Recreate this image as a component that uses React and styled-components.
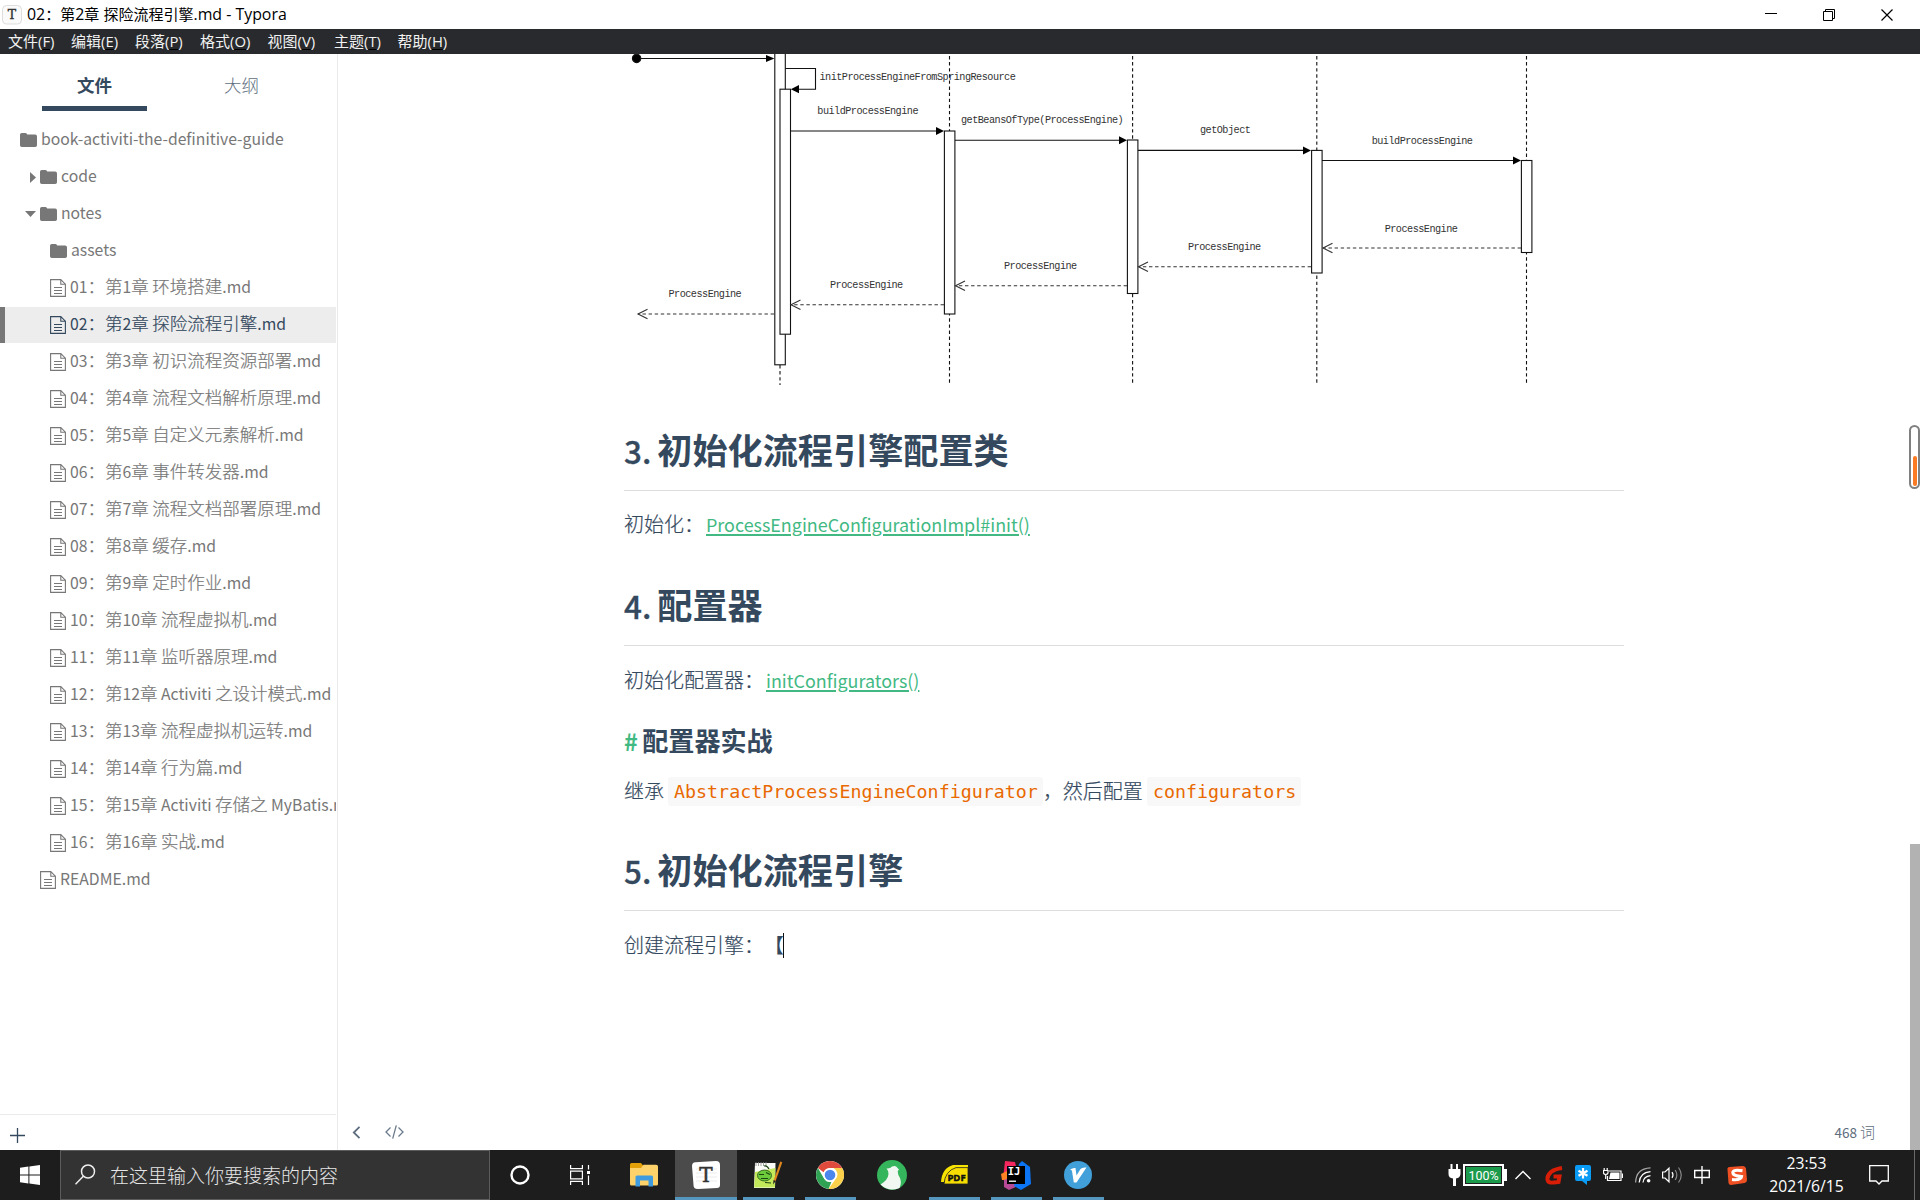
import React from 'react';
import styled, { createGlobalStyle } from 'styled-components';

const Global = createGlobalStyle`
  * { box-sizing: border-box; }
  html, body { margin: 0; padding: 0; overflow: hidden; background: #fff; }
  svg { display: block; flex: none; }
`;

const UI = `"Open Sans", "Noto Sans CJK SC", sans-serif`;
const DOC = `"Noto Sans CJK SC", sans-serif`;

const Screen = styled.div`
  width: 1920px;
  height: 1200px;
  display: flex;
  flex-direction: column;
  overflow: hidden;
  font-family: ${DOC};
  color: #34495e;
`;

/* ---------- mixed CJK / latin text ---------- */
const Latin = styled.span`
  font-size: ${(p) => p.$scale}em;
  font-weight: 400;
  -webkit-text-stroke: 0;
`;
function Mixed({ text, scale = 0.9 }) {
  return text.split(/([\u0020-\u007e]+)/).filter(Boolean).map((run, i) =>
    /[\u0020-\u007e]/.test(run[0]) ? <Latin key={i} $scale={scale}>{run}</Latin> : run
  );
}

/* ---------- title bar ---------- */
const TitleBar = styled.header`
  height: 29px;
  flex: none;
  display: flex;
  align-items: center;
  padding: 0 4px 0 2px;
  background: #fff;
  color: #000;
  font-family: ${UI};
`;
const TitleText = styled.div`
  flex: 1;
  margin-left: 5px;
  font-size: 15px;
  line-height: 27px;
  padding-bottom: 1px;
  white-space: pre;
`;
const WinButton = styled.div`
  width: 58px;
  height: 29px;
  display: flex;
  align-items: center;
  justify-content: center;
`;
const MenuBar = styled.nav`
  height: 25px;
  flex: none;
  display: flex;
  background: #292a2d;
  color: #f2f2f2;
  font-family: ${UI};
  font-size: 15px;
  line-height: 25px;
  padding-left: 8px;
`;
const MenuItem = styled.div`
  width: ${(p) => p.$w}px;
  white-space: nowrap;
  u { text-decoration-color: #000; text-underline-offset: 2px; }
`;

/* ---------- workspace ---------- */
const Workspace = styled.div`
  flex: 1;
  min-height: 0;
  display: flex;
`;
const Sidebar = styled.aside`
  width: 338px;
  flex: none;
  border-right: 1px solid #eaeaea;
  padding-right: 1px;
  display: flex;
  flex-direction: column;
`;
const Tabs = styled.div`
  height: 57px;
  margin-bottom: 11px;
  display: flex;
  gap: 42px;
  padding-left: 42px;
`;
const Tab = styled.div`
  width: 105px;
  padding-top: 15px;
  height: 57px;
  font-size: 17.5px;
  line-height: 32px;
  text-align: center;
  font-weight: ${(p) => (p.$active ? 700 : 300)};
  color: ${(p) => (p.$active ? '#34495e' : '#5d6d7e')};
  border-bottom: 5px solid ${(p) => (p.$active ? '#34495e' : 'transparent')};
`;
const Tree = styled.div`
  flex: 1;
  display: flex;
  flex-direction: column;
  gap: 1px;
  overflow: hidden;
`;
const Row = styled.div`
  height: 36px;
  flex: none;
  display: flex;
  align-items: center;
  padding-left: ${(p) => p.$indent - (p.$active ? 5 : 0)}px;
  font-size: 17.5px;
  font-weight: 300;
  line-height: 36px;
  white-space: pre;
  overflow: hidden;
  color: ${(p) => (p.$active ? '#34495e' : '#777')};
  background: ${(p) => (p.$active ? '#ededed' : 'transparent')};
  border-left: ${(p) => (p.$active ? '5px solid #777' : '0')};
  -webkit-text-stroke: 0.2px;
`;
const RowLabel = styled.span`
  margin-left: 4px;
  padding-bottom: 3px;
`;
const Twist = styled.span`
  width: 15px;
  display: flex;
  justify-content: ${(p) => (p.$open ? 'flex-start' : 'center')};
`;
const SideFooter = styled.div`
  height: 36px;
  border-top: 1px solid #eaeaea;
  padding: 13px 0 0 10px;
`;

const Main = styled.main`
  flex: 1;
  min-width: 0;
  display: flex;
  background: #fff;
`;
const Pane = styled.section`
  flex: 1;
  display: flex;
  flex-direction: column;
  min-width: 0;
`;
const Article = styled.article`
  width: 1000px;
  margin-left: 286px;
  flex: 1;
  min-height: 0;
`;
const Figure = styled.figure`
  margin: 0 0 37px;
  height: 336px;
`;
const H2 = styled.h2`
  margin: ${(p) => p.$top}px 0 ${(p) => p.$bottom ?? 18}px;
  height: 64px;
  border-bottom: 1px solid #ddd;
  font-size: 35.15px;
  line-height: 44px;
  font-weight: 700;
  white-space: pre;
`;
const Num = styled.span`
  margin-right: -1px;
  font-size: 31.4px;
  font-weight: 500;
  -webkit-text-stroke: 0.3px;
`;
const H3 = styled.h3`
  margin: 26px 0 16px;
  font-size: 26.1px;
  line-height: 36px;
  font-weight: 700;
  white-space: pre;
`;
const Hash = styled.span`
  margin-right: -1px;
  color: #42b983;
  font-size: 23.5px;
`;
const P = styled.p`
  margin: 0;
  height: 32px;
  display: flex;
  align-items: center;
  font-size: 20px;
  line-height: 32px;
  font-weight: 300;
  white-space: pre;
  text-spacing-trim: space-all;
  -webkit-text-stroke: 0.2px;
`;
const Link = styled.a`
  margin-left: 2px;
  font-size: 17.92px;
  font-weight: 400;
  color: #42b983;
  text-decoration: underline;
  text-decoration-thickness: 2px;
  text-underline-offset: 2px;
  text-decoration-skip-ink: auto;
  -webkit-text-stroke: 0;
`;
const Code = styled.code`
  margin-left: 4px;
  height: 29px;
  padding: 0 5px 0 6px;
  border-radius: 3px;
  background: #f8f8f8;
  color: #e96900;
  font-family: "DejaVu Sans Mono", monospace;
  font-size: 18.3px;
  letter-spacing: 0.02px;
  line-height: 29px;
  font-weight: 400;
  -webkit-text-stroke: 0;
`;
const Caret = styled.span`
  width: 1px;
  height: 25px;
  margin-left: -1px;
  background: #111;
`;
const StatusBar = styled.footer`
  height: 40px;
  display: flex;
  align-items: center;
  padding: 4px 34px 0 14px;
  color: #6b7b8b;
`;
const Spacer = styled.div`flex: 1;`;
const Gap = styled.div`width: 24px;`;
const WordCount = styled.div`
  font-size: 15px;
  font-weight: 300;
  color: #5d6d7e;
  line-height: 30px;
`;
const Rail = styled.div`
  width: 11px;
  flex: none;
  display: flex;
  flex-direction: column;
  align-items: flex-end;
  padding-top: 371px;
`;
const Gauge = styled.div`
  width: 11px;
  height: 64px;
  border: 2px solid #808080;
  border-radius: 6px;
  padding: 1px;
  display: flex;
  align-items: flex-end;
  justify-content: center;
`;
const GaugeFill = styled.div`
  width: 4px;
  height: 30px;
  border-radius: 2px;
  background: #fb7a24;
`;
const Thumb = styled.div`
  width: 10px;
  flex: 1;
  margin-top: 355px;
  background: #b2b2b2;
`;

/* ---------- taskbar ---------- */
const Taskbar = styled.div`
  height: 50px;
  flex: none;
  display: flex;
  background: #1d1d1d;
  font-family: ${UI};
`;
const Start = styled.div`
  width: 60px;
  display: flex;
  align-items: center;
  justify-content: center;
`;
const Search = styled.div`
  width: 430px;
  margin-right: -1px;
  border: 1px solid #5c5c5c;
  background: #333;
  display: flex;
  align-items: center;
  gap: 14px;
  padding: 0 0 2px 14px;
  color: #e6e6e6;
  font-family: ${DOC};
  font-weight: 300;
  font-size: 19px;
`;
const AppCell = styled.div`
  width: 62px;
  display: flex;
  align-items: center;
  justify-content: center;
  background: ${(p) => (p.$active ? '#4b4b4b' : 'transparent')};
  box-shadow: ${(p) => (p.$active ? 'inset 0 -3px #5596be' : 'none')};
`;
const Running = styled.div`
  width: 51px;
  height: 50px;
  display: flex;
  align-items: center;
  justify-content: center;
  border-top: 3px solid transparent;
  border-bottom: 3px solid ${(p) => (p.$on ? '#5596be' : 'transparent')};
`;
const Tray = styled.div`
  margin-left: auto;
  display: flex;
  align-items: center;
  color: #fff;
`;
const TraySlot = styled.div`
  width: ${(p) => p.$w}px;
  display: flex;
  align-items: center;
  justify-content: center;
`;
const Battery = styled.div`
  width: 41px;
  height: 22px;
  border: 2px solid #fff;
  background: #1c9a4b;
  box-shadow: inset 0 0 0 1px #1d1d1d;
  font-size: 12.5px;
  line-height: 19px;
  text-align: center;
  font-family: Roboto, sans-serif;
`;
const Nub = styled.div`
  width: 3px;
  height: 12px;
  background: #fff;
`;
const Clock = styled.div`
  width: 90px;
  padding-left: 1px;
  text-align: center;
  font-size: 15.7px;
  line-height: 23px;
`;
const ShowDesktop = styled.div`
  width: 6px;
  height: 50px;
  border-left: 1px solid #6a6a6a;
`;

/* ---------- icons ---------- */
const FolderIcon = () => (
  <svg width="17" height="14" viewBox="0 0 17 14" fill="#777">
    <path d="M0 1.8Q0 0 1.8 0H5.4Q7 0 7.2 1.6H15.2Q17 1.6 17 3.4V12.2Q17 14 15.2 14H1.8Q0 14 0 12.2Z" />
  </svg>
);
const FileIcon = () => (
  <svg width="16" height="18" viewBox="0 0 16 18" fill="none" stroke="currentColor" strokeWidth="1.1">
    <path d="M.6.6H10.8L15.4 5.2V17.4H.6Z M10.8.6V5.2H15.4 M4 8.5H12 M4 11.5H12 M4 14.5H12" />
  </svg>
);
const ArrowRight = () => <svg width="6" height="11" viewBox="0 0 6 11"><path d="M0 0L6 5.5 0 11Z" fill="#777" /></svg>;
const ArrowDown = () => <svg width="11" height="6" viewBox="0 0 11 6"><path d="M0 0H11L5.5 6Z" fill="#777" /></svg>;

/* ---------- sequence diagram ---------- */
const DiagramText = styled.text`
  font-family: "Liberation Mono", monospace;
  font-size: 10.2px;
  letter-spacing: -0.52px;
  fill: #333;
`;
const calls = [
  [790.5, 944, 131, 'buildProcessEngine', 817.3, 114],
  [955, 1127, 140.2, 'getBeansOfType(ProcessEngine)', 961, 123],
  [1138, 1311, 150.4, 'getObject', 1200, 133.2],
  [1322, 1521, 160.5, 'buildProcessEngine', 1371.7, 143.5],
];
const returns = [
  [774, 638, 314, 668.5, 297],
  [944, 791, 304.7, 830, 287.8],
  [1127, 955.5, 285.8, 1004, 269.3],
  [1311, 1138.5, 266.8, 1188, 250],
  [1521, 1323, 248, 1384.7, 231.7],
];
const lifelines = [[780, 365], [949.5, 56], [1132.6, 56], [1316.8, 56], [1526.5, 56]];
const bars = [
  [774.8, 40, 364.8], [780, 89.2, 334.2], [944.4, 131, 314], [1127.4, 140, 293.5], [1311.6, 150.4, 273], [1521.4, 160.5, 252.5],
];
const Diagram = () => (
  <svg width="1000" height="336" viewBox="624 54 1000 336" stroke="#111" strokeWidth="1.1" fill="none">
    {lifelines.map(([x, y]) => <path key={x} d={`M${x} ${y}V385`} strokeDasharray="3.4 2.7" />)}
    {bars.map(([x, a, b]) => <rect key={x} x={x} y={a} width="10.5" height={b - a} fill="#fff" />)}
    <circle cx="636.6" cy="58.4" r="4.2" fill="#000" />
    <path d="M641 58.5H768" />
    <path d="M766 55L774.4 58.5 766 62Z" fill="#000" stroke="none" />
    <path d="M785.3 68.5H815.5V89.2H798" />
    <path d="M799 85L790.8 89.2 799 93.2Z" fill="#000" stroke="none" />
    <g stroke="none"><DiagramText x="819.5" y="80.4">initProcessEngineFromSpringResource</DiagramText></g>
    {calls.map(([a, b, y, t, tx, ty]) => (
      <g key={y}>
        <path d={`M${a} ${y}H${b - 6}`} />
        <path d={`M${b - 8} ${y - 4}L${b} ${y} ${b - 8} ${y + 4}Z`} fill="#000" stroke="none" />
        <DiagramText stroke="none" x={tx} y={ty}>{t}</DiagramText>
      </g>
    ))}
    {returns.map(([a, b, y, tx, ty]) => (
      <g key={y}>
        <path d={`M${a} ${y}H${b}`} strokeDasharray="3.4 2.7" stroke="#333" />
        <path d={`M${b + 9.5} ${y - 4.7}L${b} ${y} ${b + 9.5} ${y + 4.7}`} stroke="#333" />
        <DiagramText stroke="none" x={tx} y={ty}>ProcessEngine</DiagramText>
      </g>
    ))}
  </svg>
);

/* ---------- app icons ---------- */
const Glyph = styled.text`
  font-family: ${(p) => p.$f || '"DejaVu Serif", serif'};
  font-size: ${(p) => p.$s}px;
  font-weight: ${(p) => p.$w || 700};
  text-anchor: middle;
`;
const icons = {
  cortana: <svg width="20" height="20" viewBox="0 0 20 20"><circle cx="10" cy="10" r="8.5" fill="none" stroke="#fff" strokeWidth="2.4" /></svg>,
  tasks: (
    <svg width="24" height="20" viewBox="0 0 24 20" fill="none" stroke="#fff" strokeWidth="1.2">
      <path d="M.6 0V3.6H12.4V0M.6 20V16.4H12.4V20M.6 6.2H12.4V13.8H.6ZM18.5 0V4.5M18.5 10.5V20" /><path d="M17 6H20V9H17Z" fill="#fff" stroke="none" />
    </svg>
  ),
  explorer: (
    <svg width="28" height="24" viewBox="0 0 28 24">
      <path d="M0 1.5Q0 0 1.5 0H11L13.5 3V6H0Z" fill="#e3a008" /><path d="M0 5H11L13.5 1.8H26Q28 1.8 28 3.5V21Q28 22.5 26.5 22.5H1.5Q0 22.5 0 21Z" fill="#fdd26a" />
      <path d="M5.5 23.5V14Q5.5 12.5 7 12.5H21.5Q23 12.5 23 14V23.5H18.5V17.5H10V23.5Z" fill="#3e9be0" />
    </svg>
  ),
  typora: (
    <svg width="30" height="29" viewBox="0 0 30 29">
      <path d="M1 5Q1 1.3 4.5 1.2L25 0Q29 0 29 4V24Q29 27 26 27L7 28Q3 28.2 2.6 25Z" fill="#fff" />
      <path d="M5 8H26M5 12H26M5 16H26M5 20H26" stroke="#e6e6e6" strokeWidth=".8" />
      <Glyph $s="20" $w={400} x="15" y="21" fill="#333" stroke="#333" strokeWidth=".5">T</Glyph>
    </svg>
  ),
  npp: (
    <svg width="30" height="28" viewBox="0 0 30 28">
      <path d="M2 2H22.5L22 27H1Z" fill="#fbfcf8" /><path d="M2 11L22.4 7 22 26.5H1.2Z" fill="#c3e85a" />
      <path d="M3 1V5M5.5 1V5M8 1V5M10.5 1V5M13 1V5" stroke="#888" strokeWidth=".8" />
      <ellipse cx="11.5" cy="14.5" rx="7" ry="5.5" fill="#6ccb3a" stroke="#234c14" strokeWidth=".8" /><path d="M6 13.5H11M8 17.5H15M13 11.5L17 13.5M12 21.5L18 22M11 5Q14 4 16 8" stroke="#1c4410" strokeWidth="1.2" fill="none" />
      <path d="M28.3.8L21.5 20" stroke="#e0861c" strokeWidth="2.2" /><path d="M20.6 19L20 23.5 22.8 20Z" fill="#222" />
    </svg>
  ),
  chrome: (
    <svg width="28" height="28" viewBox="0 0 28 28">
      <circle cx="14" cy="14" r="14" fill="#fff" />
      <path d="M14 0A14 14 0 0 1 26.1 7H14A7 7 0 0 0 7.6 11.2L1.9 7A14 14 0 0 1 14 0Z" fill="#e04a3c" />
      <path d="M1.9 7L8 17.5A7 7 0 0 0 15.5 20.8L12.5 27.9A14 14 0 0 1 1.9 7Z" fill="#2fa254" />
      <path d="M26.1 7A14 14 0 0 1 12.5 27.9L20 17.5A7 7 0 0 0 17.5 7Z" fill="#fbd04a" />
      <circle cx="14" cy="14" r="6.6" fill="#fff" /><circle cx="14" cy="14" r="5.3" fill="#4a86ee" />
    </svg>
  ),
  green: (
    <svg width="30" height="30" viewBox="0 0 30 30">
      <circle cx="15" cy="15" r="15" fill="#35b55c" />
      <path d="M9.5 8.5Q13 9 15 6.5Q19 5 20.5 8L22 9.5 20.8 11Q20.5 14 23 18Q25 23 22.5 28Q12 32.5 3.5 24.5Q11 20 11.5 14Q11.5 10.5 9.5 8.5Z" fill="#f1f8f2" />
    </svg>
  ),
  pdf: (
    <svg width="27" height="20" viewBox="0 0 27 20">
      <path d="M0 17Q1 3 12 0H27V3Q9 2 3 17Z" fill="#f7e300" /><path d="M3 19Q4 6 15 2.6H27V19Z" fill="#f7dc00" stroke="#222" strokeWidth=".8" />
      <Glyph $s="9.5" $f='"Open Sans", sans-serif' x="15.5" y="15.8" fill="#111" stroke="#111" strokeWidth=".5">PDF</Glyph>
    </svg>
  ),
  idea: (
    <svg width="30" height="30" viewBox="0 0 30 30">
      <path d="M4 1L14 2 17 15 7 22 2 18 3 10Z" fill="#f4275f" /><path d="M0 14L8 10 9 20 1 20Z" fill="#fd8224" /><path d="M3 20L10 17 17 26 8 30 3 27Z" fill="#b74a97" />
      <path d="M18 4L21 1 29 7 30 24 20 30 13 26Z" fill="#0b75f5" /><path d="M6 6H24V24H6Z" fill="#000" />
      <Glyph $s="10.5" $f='"DejaVu Sans Mono", monospace' x="13" y="15.4" fill="#fff">IJ</Glyph><path d="M8 20.5H15V22H8Z" fill="#ddd" />
    </svg>
  ),
  vnote: (
    <svg width="28" height="28" viewBox="0 0 28 28">
      <circle cx="14" cy="14" r="14" fill="#419fd9" /><path d="M6 8.5Q9 6.5 11.5 7L12.5 14.5 16.5 8Q18 6 22.5 6.5L12.5 21.5H9.8L8 10Q7.5 8.5 6 8.5Z" fill="#fff" />
    </svg>
  ),
};
const apps = [['cortana'], ['tasks'], ['explorer'], ['typora'], ['npp', 1], ['chrome', 1], ['green'], ['pdf', 1], ['idea', 1], ['vnote', 1]];

const menus = [['文件', 'F', 63], ['编辑', 'E', 64], ['段落', 'P', 65], ['格式', 'O', 67.5], ['视图', 'V', 66.5], ['主题', 'T', 63.5], ['帮助', 'H', 70]];
const files = [
  '01：第1章 环境搭建.md', '02：第2章 探险流程引擎.md', '03：第3章 初识流程资源部署.md', '04：第4章 流程文档解析原理.md',
  '05：第5章 自定义元素解析.md', '06：第6章 事件转发器.md', '07：第7章 流程文档部署原理.md', '08：第8章 缓存.md', '09：第9章 定时作业.md',
  '10：第10章 流程虚拟机.md', '11：第11章 监听器原理.md', '12：第12章 Activiti 之设计模式.md', '13：第13章 流程虚拟机运转.md',
  '14：第14章 行为篇.md', '15：第15章 Activiti 存储之 MyBatis.md', '16：第16章 实战.md',
];

const Folder = ({ indent, name, twist }) => (
  <Row $indent={indent}>
    {twist === 'right' && <Twist><ArrowRight /></Twist>}
    {twist === 'down' && <Twist $open><ArrowDown /></Twist>}
    <FolderIcon />
    <RowLabel><Mixed text={name} /></RowLabel>
  </Row>
);
const File = ({ indent, name, active }) => (
  <Row $indent={indent} $active={active}>
    <FileIcon />
    <RowLabel><Mixed text={name} /></RowLabel>
  </Row>
);

export default function App() {
  return (
    <Screen>
      <Global />
      <TitleBar>
        <svg width="20" height="20" viewBox="0 0 20 20">
          <rect x=".5" y=".5" width="19" height="18.5" rx="4" fill="#fafafa" stroke="#ddd" />
          <Glyph $s="12.5" $w={400} x="10" y="14" fill="#333" stroke="#333" strokeWidth=".4">T</Glyph>
        </svg>
        <TitleText><Mixed text="02：第2章 探险流程引擎.md - Typora" scale={1.06} /></TitleText>
        <WinButton><svg width="12" height="12"><path d="M0 4.5H12" stroke="#000" /></svg></WinButton>
        <WinButton><svg width="12" height="12" fill="none" stroke="#000"><path d="M.5 2.5H9.5V11.5H.5ZM2.5 2.5V.5H11.5V9.5H9.5" /></svg></WinButton>
        <WinButton><svg width="12" height="12" stroke="#000" strokeWidth="1.2"><path d="M.5.5L11.5 11.5M11.5.5L.5 11.5" /></svg></WinButton>
      </TitleBar>
      <MenuBar>
        {menus.map(([t, k, w]) => <MenuItem key={k} $w={w}>{t}<Latin $scale={0.99}>(<u>{k}</u>)</Latin></MenuItem>)}
      </MenuBar>
      <Workspace>
        <Sidebar>
          <Tabs>
            <Tab $active>文件</Tab>
            <Tab>大纲</Tab>
          </Tabs>
          <Tree>
            <Folder indent={20} name="book-activiti-the-definitive-guide" />
            <Folder indent={25} name="code" twist="right" />
            <Folder indent={25} name="notes" twist="down" />
            <Folder indent={50} name="assets" />
            {files.map((f, i) => <File key={f} indent={50} name={f} active={i === 1} />)}
            <File indent={40} name="README.md" />
          </Tree>
          <SideFooter>
            <svg width="15" height="15"><path d="M0 7.5H15M7.5 0V15" stroke="#34495e" strokeWidth="1.3" /></svg>
          </SideFooter>
        </Sidebar>
        <Main>
          <Pane>
            <Article>
              <Figure><Diagram /></Figure>
              <H2 $top={0} $bottom={17}><Num>3. </Num>初始化流程引擎配置类</H2>
              <P>初始化：<Link>ProcessEngineConfigurationImpl#init()</Link></P>
              <H2 $top={42}><Num>4. </Num>配置器</H2>
              <P>初始化配置器：<Link>initConfigurators()</Link></P>
              <H3><Hash># </Hash>配置器实战</H3>
              <P>继承<Code>AbstractProcessEngineConfigurator</Code>，然后配置<Code>configurators</Code></P>
              <H2 $top={40}><Num>5. </Num>初始化流程引擎</H2>
              <P>创建流程引擎：【<Caret /></P>
            </Article>
            <StatusBar>
              <svg width="9" height="13" fill="none" stroke="#5d6d7e" strokeWidth="1.8"><path d="M7.5.8L1.8 6.5 7.5 12.2" /></svg>
              <Gap />
              <svg width="19" height="14" fill="none" stroke="#6b7b8b" strokeWidth="1.3"><path d="M5.5 2.5L1 7 5.5 11.5M13.5 2.5L18 7 13.5 11.5M11.3.3L7.7 13.7" /></svg>
              <Spacer />
              <WordCount><Mixed text="468 词" /></WordCount>
            </StatusBar>
          </Pane>
          <Rail>
            <Gauge><GaugeFill /></Gauge>
            <Thumb />
          </Rail>
        </Main>
      </Workspace>
      <Taskbar>
        <Start>
          <svg width="20" height="20" fill="#fff"><path d="M0 2.8L8.4 1.6V9.5H0ZM9.4 1.5L20 0V9.5H9.4ZM0 10.5H8.4V18.4L0 17.2ZM9.4 10.5H20V20L9.4 18.5Z" /></svg>
        </Start>
        <Search>
          <svg width="21" height="21" fill="none" stroke="#eee" strokeWidth="1.5"><circle cx="13" cy="7.5" r="6.5" /><path d="M8.3 12.2L.5 20.3" /></svg>
          在这里输入你要搜索的内容
        </Search>
        {apps.map(([k, on]) => <AppCell key={k} $active={k === 'typora'}><Running $on={on}>{icons[k]}</Running></AppCell>)}
        <Tray>
          <svg width="13" height="22" fill="#fff"><path d="M2.5 0H4.5V5H8V0H10V5H12.5V10Q12 14 8 14.5V22H5V14.5Q.5 14 .5 10V5H2.5Z" /></svg>
          <TraySlot $w={2} />
          <Battery>100%</Battery>
          <Nub />
          <TraySlot $w={32}><svg width="16" height="10" fill="none" stroke="#fff" strokeWidth="1.4"><path d="M.5 9L8 1.5 15.5 9" /></svg></TraySlot>
          <TraySlot $w={29}>
            <svg width="18" height="19" fill="none" stroke="#d81e06" strokeWidth="4"><path d="M17 2Q10 3 6 6Q1 11 3 15Q4 17 9 16.5L13.5 16 14.5 10.5H8.5" /></svg>
          </TraySlot>
          <TraySlot $w={30}>
            <svg width="16" height="20" fill="#0a9bf5"><path d="M2 0H14Q16 0 16 2V14Q16 16 14 16H12V20L7 16H2Q0 16 0 14V2Q0 0 2 0Z" /><path d="M8 3V13.5M3.5 5.7L12.5 10.8M12.5 5.7L3.5 10.8" stroke="#fff" strokeWidth="2.2" /></svg>
          </TraySlot>
          <TraySlot $w={30}>
            <svg width="20" height="14" fill="none" stroke="#fff" strokeWidth="1.2"><path d="M6 3H18V12.5H4.5V8" /><path d="M7.5 4.5H16.5V11H6Z" fill="#fff" stroke="none" /><path d="M19.4 5.5V10" /><path d="M1.2 0V2.5M4.2 0V2.5M.5 2.5H5V5Q4.5 6.5 2.7 6.5T.5 5ZM2.7 6V11" /></svg>
          </TraySlot>
          <TraySlot $w={30}>
            <svg width="16" height="16" fill="none" stroke="#fff" strokeWidth="1.2"><path d="M.6 15.5Q1 1.5 15.5.8" stroke="#aaa" /><path d="M4.2 15.5Q4.8 5.5 15.5 4.6M8 15.5Q8.5 9.3 15.5 8.6" /><circle cx="13.6" cy="13.8" r="1.8" fill="#fff" stroke="none" /></svg>
          </TraySlot>
          <TraySlot $w={28}>
            <svg width="21" height="18" fill="none" stroke="#fff" strokeWidth="1.2"><path d="M.6 6H3L7 2.2V15.8L3 12H.6ZM10 6.2Q12 9 10 11.8" /><path d="M13.2 4Q16.5 9 13.2 14M16.5 1.5Q22 9 16.5 16.5" stroke="#888" /></svg>
          </TraySlot>
          <TraySlot $w={32}>
            <svg width="16" height="18" fill="none" stroke="#fff" strokeWidth="1.4"><path d="M.7 4.5H15.3V11.5H.7ZM8 0V18" /></svg>
          </TraySlot>
          <TraySlot $w={38}>
            <svg width="20" height="19"><path d="M.5 3.5Q0 1.5 2.5 1L16 0Q18.5 0 19 2.5L20 14Q20 16.5 17.5 17L4 19Q2 19 1.5 17Z" fill="#ee5023" /><path d="M15.5 4.8Q6 3.2 5.8 6.5T14.6 10.6Q14 14.5 5 13.6" fill="none" stroke="#fff" strokeWidth="3" /></svg>
          </TraySlot>
          <TraySlot $w={5} />
          <Clock>23:53<br />2021/6/15</Clock>
          <TraySlot $w={55}>
            <svg width="20" height="20" fill="none" stroke="#fff" strokeWidth="1.3"><path d="M.7.7H19.3V16H13L10 19 7 16H.7Z" /></svg>
          </TraySlot>
          <TraySlot $w={8} />
          <ShowDesktop />
        </Tray>
      </Taskbar>
    </Screen>
  );
}
